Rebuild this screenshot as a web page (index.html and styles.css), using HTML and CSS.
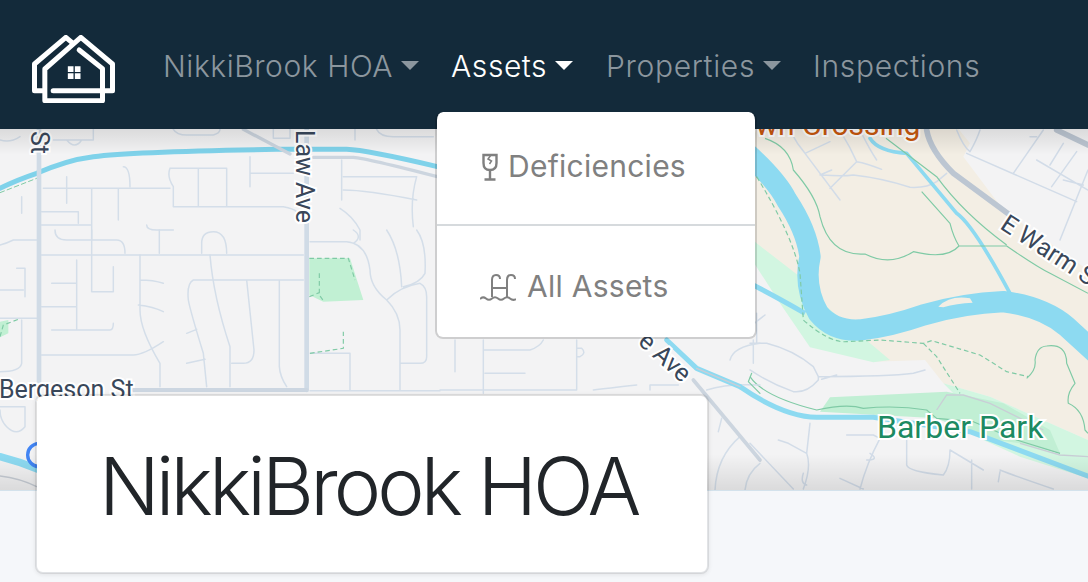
FILE: index.html
```html
<!DOCTYPE html>
<html lang="en">
<head>
<meta charset="utf-8">
<title>NikkiBrook HOA</title>
<link rel="stylesheet" href="styles.css">
</head>
<body>
<nav class="navbar">
  <a class="brand" href="#" aria-label="Home">
    <svg class="logo" viewBox="97 103 248 204" fill="none" stroke="#fff" stroke-width="15" stroke-linejoin="round" stroke-linecap="round">
      <path d="M128 270H104V190L198 110L216 125"/>
      <path d="M160 270H338V190L243 110L135 205V300H308V275"/>
      <path d="M238 148L308 204V270"/>
      <path stroke="none" fill="#fff" d="M204 197h17v17h-17zM225 197h17v17h-17zM204 218h17v17h-17zM225 218h17v17h-17z"/>
    </svg>
  </a>
  <ul class="nav-list">
    <li class="nav-item"><a class="nav-link caret" href="#">NikkiBrook HOA</a></li>
    <li class="nav-item">
      <a class="nav-link caret active" href="#">Assets</a>
      <div class="dropdown">
        <a class="dropdown-item" href="#">
          <svg class="icon-glass" viewBox="0 0 18 28" fill="none" stroke="#808080" stroke-width="2.400">
            <path d="M2.500 2H15.500V10Q15.500 17 9 17Q2.500 17 2.500 10Z"/>
            <path d="M9 17V26M3.500 26.500H14.500"/>
            <path d="M10 2L7 6L10.500 8L8.500 11" stroke-width="1.500"/>
          </svg>
          <span class="item-label-tight">Deficiencies</span>
        </a>
        <a class="dropdown-item second" href="#">
          <svg class="icon-pool" viewBox="0 0 36 28" fill="none" stroke="#808080" stroke-width="2">
            <path d="M12 24V7Q12 2 16 2Q20 2 20 6"/>
            <path d="M27 24V7Q27 2 31 2Q35 2 35 6"/>
            <path d="M12 15H27"/>
            <path d="M0 26Q3 23 6 25.500T12 25.500T18 25.500T24 25.500T30 25.500T36 26"/>
          </svg>
          <span>All Assets</span>
        </a>
      </div>
    </li>
    <li class="nav-item"><a class="nav-link caret wide" href="#">Properties</a></li>
    <li class="nav-item"><a class="nav-link wide" href="#">Inspections</a></li>
  </ul>
</nav>

<section class="map">
  <svg class="map-svg" viewBox="0 129 1088 361" fill="none">
    <rect x="0" y="129" width="1088" height="361" fill="#f3f3f4"/>

    <!-- right side, drawn in a 3x grid -->
    <g transform="translate(750 110) scale(.33333)">
      <path fill="#f3eee4" d="M0 50H620L660 100L640 140L760 300L1014 480V990L720 860L580 820L525 750L370 755L180 600L0 380Z"/>
      <path fill="#d2f6e1" d="M0 380L20 400L150 500L230 590L420 750L370 757L180 712L90 580L0 440Z"/>
      <path fill="#d2f6e1" d="M580 820L720 860L1014 990V1105L810 1040L700 990L640 880Z"/>
      <path fill="#c1efd4" d="M240 862L590 845L760 880L900 960L930 1030L810 1000L700 985L560 925L210 905Z"/>
      <g stroke="#d2dce8" stroke-width="4.500" stroke-linecap="round" stroke-linejoin="round">
        <path d="M125 70Q140 100 165 130L270 270M165 130L240 95M210 195L245 180M240 235L320 155Q300 110 275 70M320 155Q350 160 395 178M335 70Q360 120 380 150M215 195Q280 200 310 195Q400 205 480 232Q530 235 560 215L590 190"/>
        <path d="M650 130L980 275M790 190L880 60M860 80H840M900 165L940 100M860 150L1014 240M905 230L980 125M940 210L1000 225M1014 180L930 390M620 60Q640 110 660 125Q680 90 690 60"/>
        <path d="M0 700H50Q130 720 190 770L205 800Q420 800 490 790L525 780M205 800V810Q170 850 130 845Q60 820 0 780M215 808L260 795M0 650L45 615M20 610V700"/>
        <path d="M0 1000L130 1137M180 940L170 1030L115 1000L85 990M170 1030Q185 1070 160 1137M160 1090Q150 1120 170 1125M290 975H370L390 985Q350 1060 330 1137M360 1030Q390 1050 350 1050M270 1105L340 1137M470 990V1065Q475 1085 580 1095Q600 1070 600 1020L700 1080M665 1050V1137M750 1080Q800 1100 910 1137M750 1085L745 1115"/>
      </g>
      <g stroke="#8ddaf1" fill="none" stroke-linejoin="round">
        <path stroke-width="64" d="M-80 70Q70 190 110 270Q170 360 180 440Q160 530 205 610Q250 665 330 660Q420 650 520 615Q640 580 760 575Q880 590 950 650L1060 750"/>
        <path stroke-width="11" stroke-linecap="round" d="M360 85Q385 125 470 130L620 310Q670 345 780 550"/>
        <path stroke-width="15" d="M-20 510Q60 550 165 610"/>
        <path stroke-width="15" d="M-30 830Q100 920 200 922H370L660 965L1040 1108"/>
      </g>
      <path fill="#f3eee4" d="M565 590Q600 555 660 565L668 578Q620 580 580 592Z"/>
      <g stroke="#bcc6d2" stroke-width="17" stroke-linecap="round" stroke-linejoin="round"><path d="M530 60Q540 120 610 190L800 330"/><path d="M920 60L1014 105"/></g>
      <g stroke="#7fcaa5" stroke-width="3.500" stroke-linejoin="round">
        <path d="M45 85Q120 110 130 180Q200 260 210 320Q240 440 345 432Q420 470 490 425Q590 450 627 408Q610 380 600 340L515 245M627 408H770Q860 470 900 490L1014 550M408 85L560 200Q640 310 770 405M830 805Q860 780 855 750Q860 710 890 708Q950 700 950 760L975 820Q950 850 955 880Q1000 900 1005 960L1014 970"/>
        <path d="M0 800Q40 860 200 900Q290 880 340 895Q440 885 530 900L560 925L670 935L800 990L930 1030"/>
        <path stroke-dasharray="14 9" d="M20 200Q130 380 150 490L160 630Q240 700 290 695L390 690L520 700L545 692L640 720L690 735L770 785L835 800M520 700L560 740L630 850"/>
      </g>
      <path stroke="#c9ced6" stroke-width="4" d="M560 900L590 855H640L720 880L880 960M810 1000L930 1035L1014 1040"/>
    </g>

    <!-- upper left, drawn in a 3x grid -->
    <g stroke="#d4dee9" stroke-width="4.500" stroke-linecap="round" stroke-linejoin="round" transform="scale(.33333)">
      <path d="M0 420Q30 430 60 410M160 420H280V388M200 420Q225 450 245 420M520 388Q530 405 560 405H640Q660 400 660 388M820 388V415H870V388M1065 388V420M1130 388Q1140 410 1180 410H1300"/>
      <path d="M130 565H510M510 505H680V620M595 505V620M520 620H850Q880 625 890 635M510 505Q500 530 520 560V620M200 530V610M275 565V720M355 565V660M125 635H235V670M125 675H275M370 500Q390 500 390 560M750 470V560M750 520H880M1025 480V600M1030 530H1250M1030 570Q1100 570 1250 600M1250 530Q1230 600 1240 680M1020 625Q1060 650 1080 690V720M440 675Q440 690 470 690H520M65 590V640"/>
    </g>
    <!-- lower left, drawn in a 3x grid -->
    <g transform="translate(0 230) scale(.33333)">
      <path fill="#c1f0d3" d="M928 85H1050L1090 210L970 215L928 195ZM0 275L25 270V310L0 322Z"/>
      <g stroke="#d4dee9" stroke-width="4.500" stroke-linecap="round" stroke-linejoin="round">
        <path d="M125 75H910M165 0Q165 30 200 30H350Q375 30 375 70M275 0V185H340V110M478 0V70M605 70V40Q605 5 640 5Q680 5 680 70M230 90V300M155 160H230M125 230H230M155 300H330Q340 300 340 280"/>
        <path d="M420 75V240Q420 300 480 400V470M420 150Q460 150 490 160M415 225Q460 230 490 245M125 375H400Q430 375 490 335M630 75Q640 200 690 350V470M580 150H910M580 150Q560 160 565 210Q570 240 610 370L620 470M740 150L762 360Q762 400 730 400H695M838 150V410Q840 440 860 470M560 310L590 298M560 400L615 388"/>
        <path d="M930 35H1040Q1100 40 1110 120Q1110 170 1160 210Q1200 250 1200 300V480M1160 210Q1200 170 1260 160Q1280 170 1280 200V380Q1280 400 1260 400H1200M1060 0Q1090 20 1060 40M1160 0Q1200 60 1205 170M1250 0Q1280 40 1275 130Q1260 160 1210 170M930 370H1050V480"/>
        <path d="M0 45Q20 40 40 30H110M50 115L75 115V200M0 180H70M0 265H110M65 270V400Q60 425 0 425M0 530H75V590Q50 620 20 590Q0 570 0 540"/>
        <path d="M930 482H1320"/>
      </g>
      <path stroke="#7fcaa5" stroke-width="3.500" stroke-dasharray="14 9" d="M928 85H1045L1065 150M958 130V195L970 212M928 200L958 188M0 320L10 285L55 268M930 370L1030 355V305"/>
    </g>
    <!-- lower middle, drawn in a 3x grid -->
    <g transform="translate(440 340) scale(.33333)" stroke-linecap="round" stroke-linejoin="round">
      <g stroke="#d4dee9" stroke-width="4.500">
        <path d="M45 0V95M130 0V160M130 30H270Q300 20 310 0M135 100H255M410 0V150M410 25H425Q440 40 420 50H410M0 150H410M460 150Q500 145 590 135M630 150V135H715M800 150Q860 130 960 135M825 450Q830 350 900 290M915 450Q920 400 960 370M835 275L845 235M870 60Q880 20 960 10M940 0V70"/>
      </g>
      <path stroke="#ccd5df" stroke-width="11" d="M760 120L960 360"/>
      <path stroke="#8ddaf1" stroke-width="15" d="M680 0L770 85L900 140"/>
      <path stroke="#c9ced6" stroke-width="4" d="M770 85L900 140"/>
      <path stroke="#7fcaa5" stroke-width="3.500" d="M935 100L925 125L960 160"/>
    </g>
    <!-- canals and main roads -->
    <g transform="scale(.33333)" stroke-linecap="round" stroke-linejoin="round">
      <path stroke="#7fd2ea" stroke-width="15" d="M0 565Q50 540 110 520Q200 480 280 470Q400 455 830 448H1040Q1100 450 1312 500"/>
      <path stroke="#ccd5df" stroke-width="10" d="M730 388L870 462M940 472H1060Q1100 475 1312 530"/>
      <path stroke="#7fcaa5" stroke-width="3" stroke-dasharray="14 9" d="M0 578L110 535"/>
      <path stroke="#d0dbe6" stroke-width="14" d="M117 388V1190M920 388V1170"/>
      <path stroke="#ccd6e1" stroke-width="12" d="M400 1170H920"/>
    </g>
    <g transform="translate(0 230) scale(.33333)" stroke-linecap="round">
      <path stroke="#8ddaf1" stroke-width="22" d="M0 680Q60 695 120 720"/>
      <path stroke="#c8ced6" stroke-width="4" d="M0 738Q60 745 110 770"/>
      <circle cx="118" cy="675" r="35" stroke="#4285f4" stroke-width="10"/>
    </g>

    <text class="map-label" transform="translate(31 131) rotate(90)">St</text>
    <text class="map-label" transform="translate(296 130) rotate(90)">Law Ave</text>
    <text class="map-label" x="-1" y="398">Bergeson St</text>
    <text class="map-label" transform="translate(999 228) rotate(33)">E Warm St</text>
    <text class="map-label" transform="translate(637 343) rotate(42)">e Ave</text>
    <text class="map-label park" x="877" y="438">Barber Park</text>
    <text class="map-label orange" x="722" y="135">Town Crossing</text>
  </svg>
</section>

<main class="content">
  <div class="title-card">
    <h1 class="title">NikkiBrook HOA</h1>
  </div>
</main>
</body>
</html>
```
FILE: styles.css
```css
* { box-sizing: border-box; }
html, body { margin: 0; padding: 0; height: 100%; overflow: hidden; }
body {
  background: #f5f7fa;
  font-family: Inter, "Liberation Sans", sans-serif;
}
a { text-decoration: none; }

.navbar {
  position: relative;
  z-index: 10;
  display: flex;
  align-items: center;
  height: 129px;
  padding: 0 0 0 32px;
  background: #132a3a;
}
.brand { display: block; height: 68px; margin-top: 8px; }
.logo { display: block; width: 83px; height: 68px; }
.nav-list {
  display: flex;
  list-style: none;
  margin: 4px 0 0 32px;
  padding: 0;
}
.nav-item { position: relative; }
.nav-link {
  display: block;
  padding: 0 16px;
  font-size: 30px;
  font-weight: 300;
  line-height: 45px;
  letter-spacing: 0.55px;
  color: #8b969e;
  white-space: nowrap;
}
.nav-link.wide { letter-spacing: 0.65px; }
.nav-link.active { padding-right: 17px; color: #fff; }
.caret::after {
  content: "";
  display: inline-block;
  margin-left: 8px;
  vertical-align: 7px;
  border-top: 9px solid currentColor;
  border-left: 9px solid transparent;
  border-right: 9px solid transparent;
}

.dropdown {
  position: absolute;
  top: 68px;
  left: 0;
  width: 322px;
  height: 227px;
  background: #fff;
  border: 2px solid rgba(0, 0, 0, .15);
  border-top: 0;
  border-radius: 8px;
  background-clip: padding-box;
}
.dropdown-item {
  display: flex;
  align-items: center;
  height: 112px;
  padding: 0 0 4px 43px;
  font-size: 30px;
  color: #808080;
  white-space: nowrap;
}
.dropdown-item.second { border-top: 2px solid #d6dadd; padding-top: 10px; padding-bottom: 0; }
.item-label-tight { margin-left: 9px; }
.dropdown-item span { letter-spacing: 0.25px; }
.icon-glass { width: 18px; height: 28px; margin-left: 1px; margin-top: 1px; }
.icon-pool { width: 36px; height: 28px; margin-right: 11px; margin-top: 2px; }

.map {
  position: relative;
  height: 362px;
  border-bottom: 1px solid #d3e2ec;
}
.map::after {
  content: "";
  position: absolute;
  inset: 0;
  pointer-events: none;
  background:
    linear-gradient(to bottom, rgba(0,0,0,.1), rgba(0,0,0,0) 26px),
    linear-gradient(to top, rgba(0,0,0,.1), rgba(0,0,0,0) 36px);
}
.map-svg { display: block; width: 1088px; height: 361px; }
.map-label {
  font-family: Roboto, sans-serif;
  font-size: 25px;
  fill: #39475a;
  stroke: #fff;
  stroke-width: 4px;
  paint-order: stroke;
}
.map-label.park { font-size: 32px; fill: #1c8a62; }
.map-label.orange { font-size: 30px; fill: #c9580d; }

.content { padding: 0 0 0 35px; }
.title-card {
  position: relative;
  z-index: 5;
  width: 674px;
  height: 180px;
  margin-top: -97px;
  display: flex;
  align-items: center;
  padding: 4px 0 0 62px;
  background: #fff;
  background-clip: padding-box;
  border: 2px solid rgba(0, 0, 0, .08);
  border-radius: 8px;
  box-shadow: 0 1px 4px rgba(0, 0, 0, .08);
}
.title {
  margin: 0;
  font-size: 80px;
  font-weight: 300;
  line-height: 1;
  letter-spacing: -3.9px;
  color: #212529;
  white-space: nowrap;
}
```
